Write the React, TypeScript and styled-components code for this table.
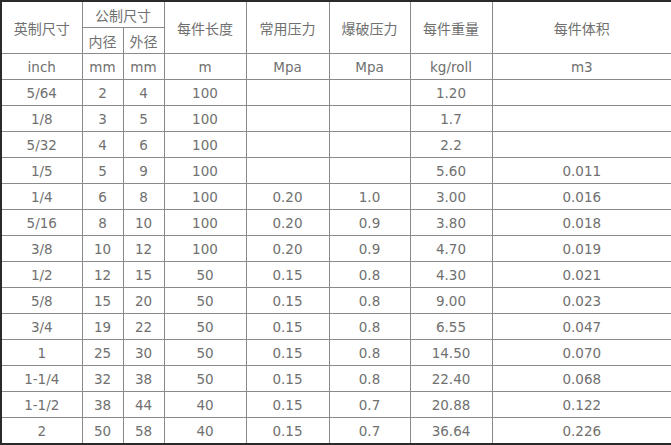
import React from 'react';
import styled, { createGlobalStyle } from 'styled-components';

const GlobalStyle = createGlobalStyle`
    html, body {
        margin: 0;
        padding: 0;
        background: #ffffff;
        overflow: hidden;
    }
`;

const widths = [80, 41, 41, 82, 83, 81, 82, 179];

const units = ['inch', 'mm', 'mm', 'm', 'Mpa', 'Mpa', 'kg/roll', 'm3'];

const rows: string[][] = [
    ['5/64', '2', '4', '100', '', '', '1.20', ''],
    ['1/8', '3', '5', '100', '', '', '1.7', ''],
    ['5/32', '4', '6', '100', '', '', '2.2', ''],
    ['1/5', '5', '9', '100', '', '', '5.60', '0.011'],
    ['1/4', '6', '8', '100', '0.20', '1.0', '3.00', '0.016'],
    ['5/16', '8', '10', '100', '0.20', '0.9', '3.80', '0.018'],
    ['3/8', '10', '12', '100', '0.20', '0.9', '4.70', '0.019'],
    ['1/2', '12', '15', '50', '0.15', '0.8', '4.30', '0.021'],
    ['5/8', '15', '20', '50', '0.15', '0.8', '9.00', '0.023'],
    ['3/4', '19', '22', '50', '0.15', '0.8', '6.55', '0.047'],
    ['1', '25', '30', '50', '0.15', '0.8', '14.50', '0.070'],
    ['1-1/4', '32', '38', '50', '0.15', '0.8', '22.40', '0.068'],
    ['1-1/2', '38', '44', '40', '0.15', '0.7', '20.88', '0.122'],
    ['2', '50', '58', '40', '0.15', '0.7', '36.64', '0.226'],
];

const App: React.FC = () => {
    return (
        <>
            <GlobalStyle />
            <Frame>
                <SpecTable>
                    <colgroup>
                        {widths.map((w, i) => (
                            <col key={i} style={{ width: w }} />
                        ))}
                    </colgroup>
                    <thead>
                        <tr>
                            <HeadCell rowSpan={2}>英制尺寸</HeadCell>
                            <HeadCell colSpan={2}>公制尺寸</HeadCell>
                            <HeadCell rowSpan={2}>每件长度</HeadCell>
                            <HeadCell rowSpan={2}>常用压力</HeadCell>
                            <HeadCell rowSpan={2}>爆破压力</HeadCell>
                            <HeadCell rowSpan={2}>每件重量</HeadCell>
                            <HeadCell rowSpan={2}>每件体积</HeadCell>
                        </tr>
                        <tr>
                            <HeadCell>内径</HeadCell>
                            <HeadCell>外径</HeadCell>
                        </tr>
                    </thead>
                    <tbody>
                        <tr>
                            {units.map((u, i) => (
                                <Cell key={i}>{u}</Cell>
                            ))}
                        </tr>
                        {rows.map((r, ri) => (
                            <tr key={ri}>
                                {r.map((v, ci) => (
                                    <Cell key={ci}>{v}</Cell>
                                ))}
                            </tr>
                        ))}
                    </tbody>
                </SpecTable>
            </Frame>
        </>
    );
};

export default App;

const Frame = styled.div`
    width: 671px;
    box-sizing: border-box;
    border-top: 2px solid #2a2a2a;
    border-left: 2px solid #2a2a2a;
    border-bottom: 2px solid #2a2a2a;
`;

const SpecTable = styled.table`
    width: 669px;
    table-layout: fixed;
    border-collapse: collapse;
    border-style: hidden;
    font-family: "DejaVu Sans", Verdana, "Noto Sans CJK SC", sans-serif;
    font-size: 13.5px;
    color: #707070;
`;

const Cell = styled.td`
    height: 25px;
    padding: 0;
    border: 1px solid #8a8a8a;
    text-align: center;
    vertical-align: middle;
    white-space: nowrap;
    line-height: 16px;
`;

const HeadCell = styled.th`
    height: 25px;
    padding: 0;
    border: 1px solid #8a8a8a;
    text-align: center;
    vertical-align: middle;
    font-weight: normal;
    white-space: nowrap;
    line-height: 16px;
    font-family: "Noto Sans CJK SC", "DejaVu Sans", sans-serif;
    font-size: 14px;
`;
